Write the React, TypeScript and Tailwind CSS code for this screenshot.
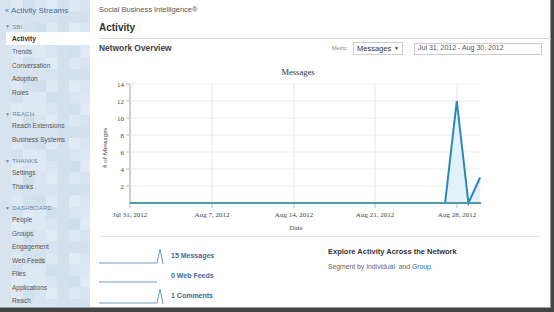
import React from "react";

const sections = [
  { title: "SBI", items: ["Activity", "Trends", "Conversation", "Adoption", "Roles"] },
  { title: "REACH", items: ["Reach Extensions", "Business Systems"] },
  { title: "THANKS", items: ["Settings", "Thanks"] },
  {
    title: "DASHBOARD",
    items: ["People", "Groups", "Engagement", "Web Feeds", "Files", "Applications", "Reach"],
  },
];

const mosaicColors = ["#d7e4f0", "#dce8f3", "#d3e1ee", "#e1ebf5", "#d9e6f1", "#d0dfec", "#dfe9f4"];

function Mosaic() {
  const cells: React.ReactNode[] = [];
  for (let r = 0; r < 28; r++) {
    for (let c = 0; c < 8; c++) {
      const i = (r * 7 + c * 13 + ((r * c) % 5)) % mosaicColors.length;
      cells.push(
        <rect key={r + "-" + c} x={c * 11.5} y={r * 11.5} width={11.5} height={11.5} fill={mosaicColors[i]} />
      );
    }
  }
  return (
    <svg className="absolute inset-0" width={90} height={308}>
      {cells}
    </svg>
  );
}

function Sidebar() {
  return (
    <div className="relative w-[90px] h-full shrink-0 overflow-hidden bg-[#d8e5f1]">
      <Mosaic />
      <div className="relative flex flex-col">
        <div className="h-[22px] flex items-center pl-[5px] text-[8px] text-[#3e70a6]">
          <span className="mr-[2px] text-[7px]">«</span>Activity Streams
        </div>
        {sections.map((s, si) => (
          <div key={s.title} className={si > 0 ? "mt-[10px]" : ""}>
            <div className="h-[10px] flex items-center pl-[5px] text-[6px] text-[#6e84a0] tracking-[0.2px]">
              <span className="mr-[2px] text-[5px]">▼</span>
              {s.title}
            </div>
            {s.items.map((it) => (
              <div
                key={it}
                className={
                  it === "Activity" && si === 0
                    ? "h-[13.4px] ml-[6px] pl-[6px] flex items-center bg-white text-[6.6px] font-bold text-[#333]"
                    : "h-[13.5px] ml-[6px] pl-[6px] flex items-center text-[6.5px] text-[#555]"
                }
              >
                {it}
              </div>
            ))}
          </div>
        ))}
      </div>
    </div>
  );
}

const yTicks = [14, 12, 10, 8, 6, 4, 2];
const xTicks = [
  { x: 130, l: "Jul 31, 2012" },
  { x: 212, l: "Aug 7, 2012" },
  { x: 294, l: "Aug 14, 2012" },
  { x: 375, l: "Aug 21, 2012" },
  { x: 457, l: "Aug 28, 2012" },
];

function Chart() {
  const y0 = 203;
  const unit = 8.5;
  const day = 11.67;
  const pts = [
    [130, 0],
    [130 + 27 * day, 0],
    [130 + 28 * day, 12],
    [130 + 29 * day, 0],
    [130 + 30 * day, 3],
  ].map(([x, v]) => [x, y0 - v * unit]);
  const line = pts.map((p) => p.join(",")).join(" ");
  const area = line + ` ${pts[pts.length - 1][0]},${y0} 130,${y0}`;
  return (
    <svg width={452} height={178} className="block" style={{ fontFamily: '"Liberation Serif", serif' }}>
      <g transform="translate(-99,-58)">
        <text x={298} y={75} fontSize={8.5} textAnchor="middle" fill="#333">
          Messages
        </text>
        {yTicks.map((t) => (
          <g key={t}>
            <line x1={130} x2={481} y1={y0 - t * unit} y2={y0 - t * unit} stroke="#ececec" strokeWidth={1} />
            <line x1={126} x2={130} y1={y0 - t * unit} y2={y0 - t * unit} stroke="#bbb" strokeWidth={1} />
            <text x={124} y={y0 - t * unit + 2.5} fontSize={7} textAnchor="end" fill="#444">
              {t}
            </text>
          </g>
        ))}
        {xTicks.map((t) => (
          <g key={t.l}>
            <line x1={t.x} x2={t.x} y1={84} y2={y0} stroke="#e6e6e6" strokeWidth={1} />
            <line x1={t.x} x2={t.x} y1={y0} y2={y0 + 5} stroke="#bbb" strokeWidth={1} />
            <text x={t.x} y={217} fontSize={7} textAnchor="middle" fill="#444">
              {t.l}
            </text>
          </g>
        ))}
        <line x1={130} x2={130} y1={84} y2={y0} stroke="#cfcfcf" strokeWidth={2} />
        <polygon points={area} fill="#e3f1fa" />
        <polyline points={line} fill="none" stroke="#2a88bd" strokeWidth={2} strokeLinejoin="miter" />
        <line x1={130} x2={481} y1={y0} y2={y0} stroke="#4e9aa6" strokeWidth={2} />
        <text
          x={104}
          y={148}
          fontSize={7}
          textAnchor="middle"
          fill="#444"
          transform="rotate(-90 104 148)"
          dy={2.5}
        >
          # of Messages
        </text>
        <text x={296} y={230} fontSize={7} textAnchor="middle" fill="#444">
          Date
        </text>
      </g>
    </svg>
  );
}

function Spark({ spike }: { spike: boolean }) {
  return (
    <svg width={66} height={20} className="shrink-0">
      <polyline
        points={spike ? "0,17 58,17 61,3 64,18" : "0,16 58,16"}
        fill="none"
        stroke="#6f9cc4"
        strokeWidth={1}
      />
    </svg>
  );
}

export default function App() {
  return (
    <div className="w-[554px] h-[312px] bg-[#444] overflow-hidden" style={{ fontFamily: '"Liberation Sans", Arial, sans-serif' }}>
      <div className="w-[551px] h-[308px] bg-white flex border-r border-b border-[#999]">
        <Sidebar />
        <div className="flex-1 flex flex-col pl-[9px]">
          <div className="h-[20px] flex items-center text-[7.5px] text-[#555]">Social Business Intelligence®</div>
          <div className="h-[14px] flex items-center text-[10px] font-bold text-[#333]">Activity</div>
          <div className="mt-[4px] h-px bg-[#d4d4d4]" />
          <div className="h-[19px] flex items-center justify-between pr-[9px]">
            <span className="text-[8.4px] font-bold text-[#444]">Network Overview</span>
            <div className="flex items-center">
              <span className="text-[5.5px] text-[#888] mr-[6px]">Metric</span>
              <div className="w-[50px] h-[13px] border border-[#ccc] flex items-center justify-between px-[3px] text-[7.5px] text-[#333]">
                Messages<span className="text-[5px]">▼</span>
              </div>
              <div className="ml-[11px] w-[128px] h-[12px] border border-[#ccc] flex items-center px-[3px] text-[7px] text-[#555]">
                Jul 31, 2012 - Aug 30, 2012
              </div>
            </div>
          </div>
          <Chart />
          <div className="h-px w-[442px] bg-[#e4e4e4]" />
          <div className="flex">
            <div className="w-[229px] flex flex-col pt-[9px]">
              {[
                { l: "15 Messages", s: true },
                { l: "0 Web Feeds", s: false },
                { l: "1 Comments", s: true },
              ].map((r) => (
                <div key={r.l} className="h-[20px] flex items-center">
                  <Spark spike={r.s} />
                  <span className="ml-[6px] text-[7px] font-bold text-[#3f6896]">{r.l}</span>
                </div>
              ))}
            </div>
            <div className="flex flex-col pt-[9px]">
              <div className="h-[12px] flex items-center text-[7.5px] font-bold text-[#333]">
                Explore Activity Across the Network
              </div>
              <div className="mt-[3px] h-[12px] flex items-center text-[6.8px] text-[#666]">
                Segment by&nbsp;<span className="text-[#3a6ea6]">Individual</span>&nbsp; and&nbsp;
                <span className="text-[#3a6ea6]">Group</span>.
              </div>
            </div>
          </div>
        </div>
      </div>
    </div>
  );
}
